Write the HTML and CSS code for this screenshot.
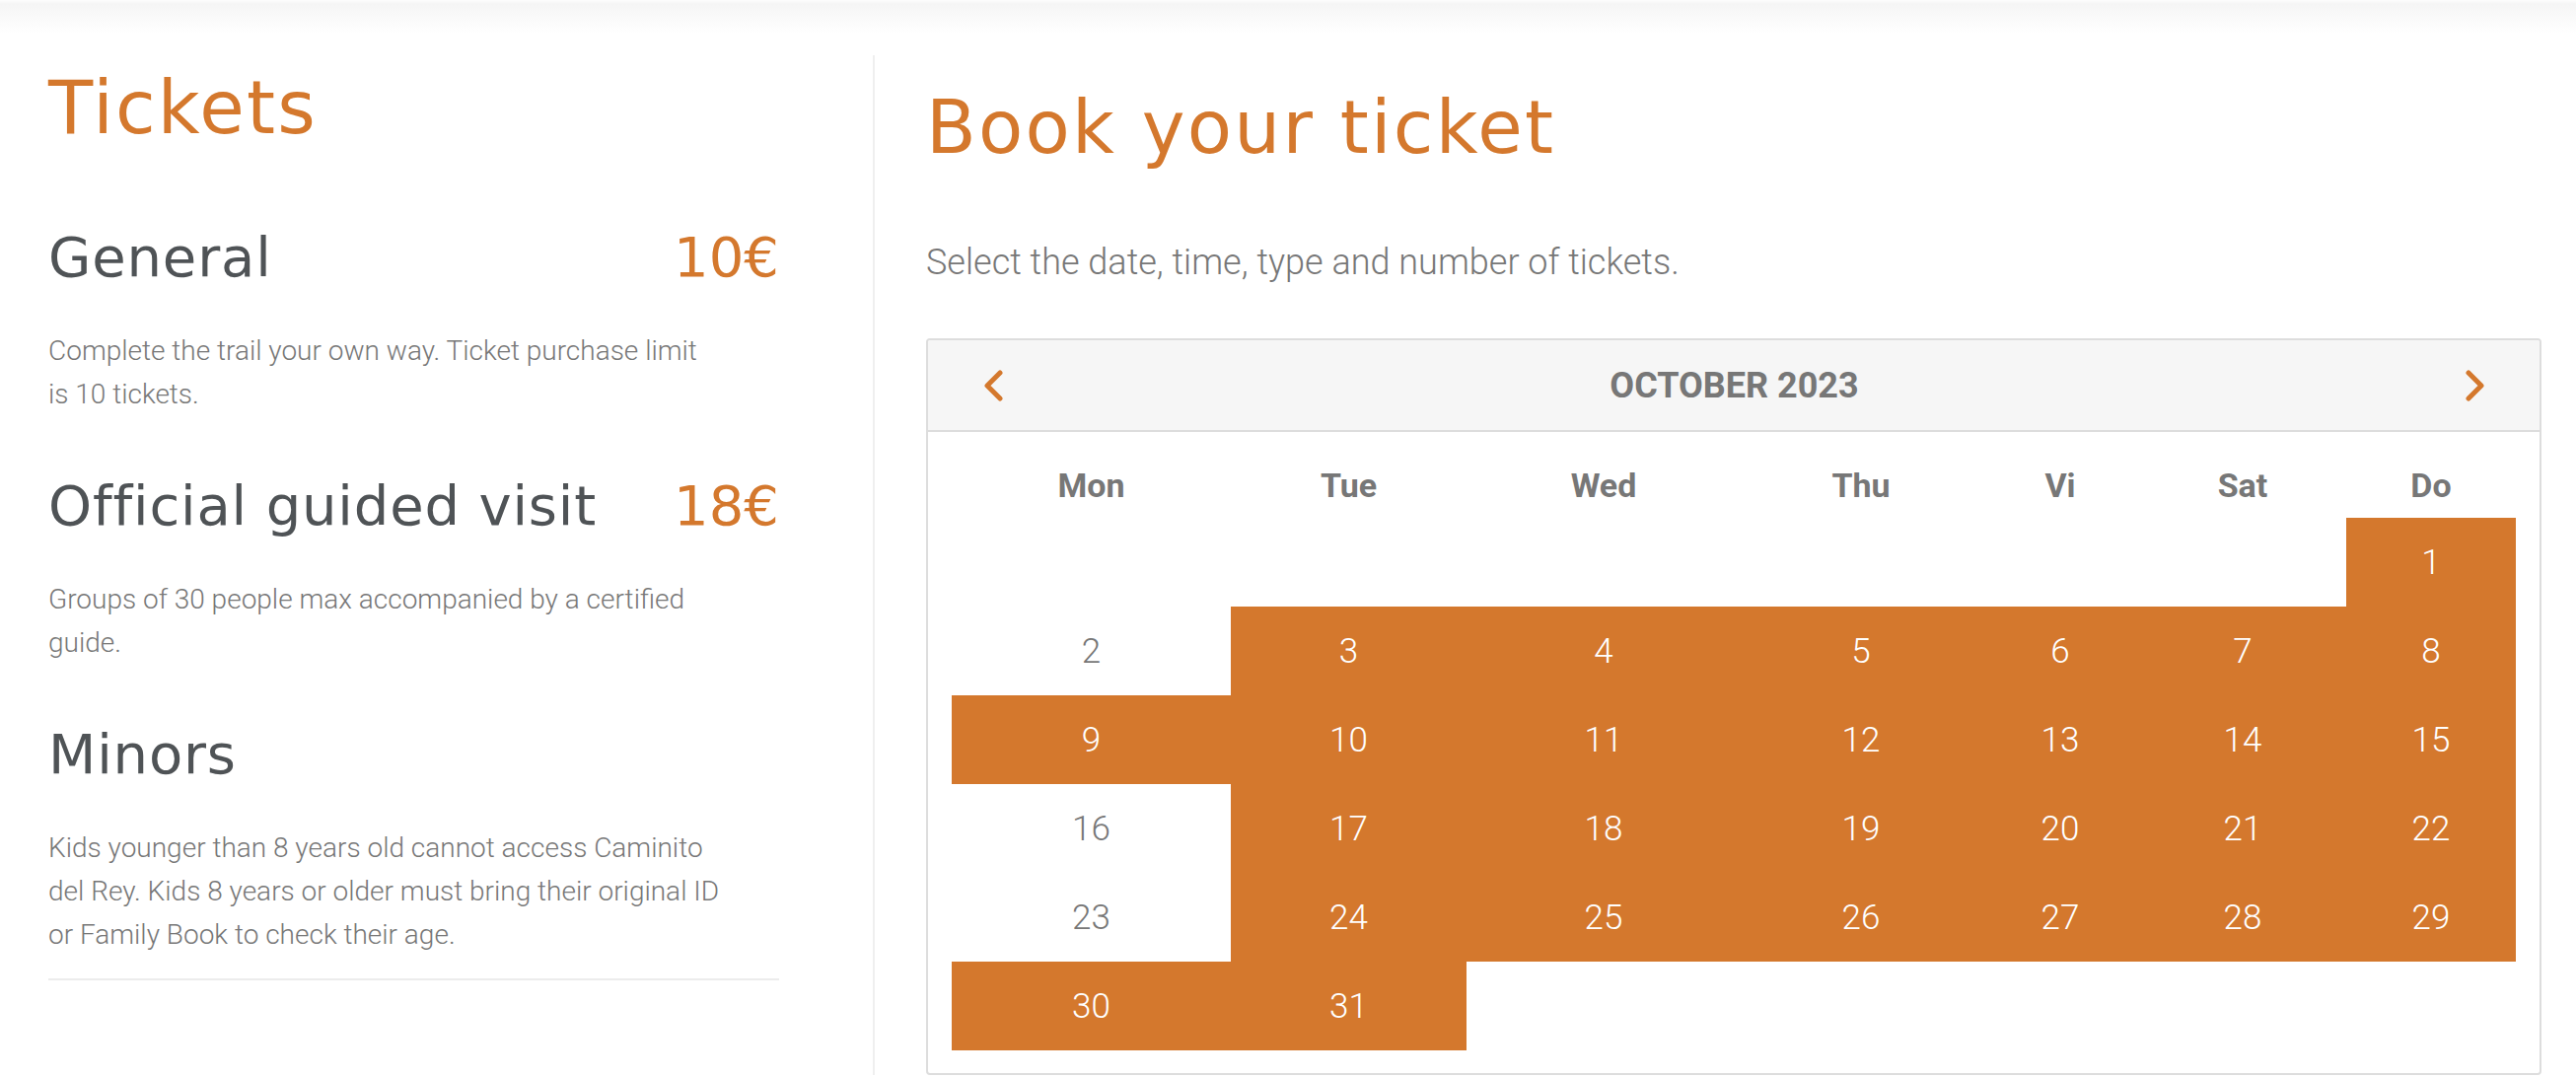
FILE: index.html
```html
<!DOCTYPE html>
<html lang="en">
<head>
  <meta charset="UTF-8" />
  <meta name="viewport" content="width=device-width, initial-scale=1.0"/>
  <title>Tickets - Caminito del Rey</title>
  <link rel="stylesheet" href="styles.css">
</head>
<body>
  <div class="topbar"></div>

  <div class="main">
    <section class="tickets">
      <h1>Tickets</h1>

      <div class="ticket">
        <div class="ticket-head">
          <h2>General</h2>
          <span class="price">10€</span>
        </div>
        <p>Complete the trail your own way. Ticket purchase limit<br>is 10 tickets.</p>
      </div>

      <div class="ticket">
        <div class="ticket-head">
          <h2>Official guided visit</h2>
          <span class="price">18€</span>
        </div>
        <p>Groups of 30 people max accompanied by a certified<br>guide.</p>
      </div>

      <div class="ticket">
        <div class="ticket-head">
          <h2>Minors</h2>
        </div>
        <p>Kids younger than 8 years old cannot access Caminito<br>del Rey. Kids 8 years or older must bring their original ID<br>or Family Book to check their age.</p>
      </div>
    </section>

    <section class="booking">
      <h1>Book your ticket</h1>
      <p class="intro">Select the date, time, type and number of tickets.</p>

      <div class="calendar">
        <div class="calendar-header">
          <span class="nav">
            <svg viewBox="0 0 20 32" width="20" height="32"><path d="M17 3 L4 16 L17 29"/></svg>
          </span>
          <span class="month">OCTOBER 2023</span>
          <span class="nav">
            <svg viewBox="0 0 20 32" width="20" height="32"><path d="M3 3 L16 16 L3 29"/></svg>
          </span>
        </div>

        <div class="calendar-grid">
          <div class="weekday">Mon</div>
          <div class="weekday">Tue</div>
          <div class="weekday">Wed</div>
          <div class="weekday">Thu</div>
          <div class="weekday">Vi</div>
          <div class="weekday">Sat</div>
          <div class="weekday">Do</div>

          <div class="day"></div>
          <div class="day"></div>
          <div class="day"></div>
          <div class="day"></div>
          <div class="day"></div>
          <div class="day"></div>
          <div class="day open">1</div>

          <div class="day">2</div>
          <div class="day open">3</div>
          <div class="day open">4</div>
          <div class="day open">5</div>
          <div class="day open">6</div>
          <div class="day open">7</div>
          <div class="day open">8</div>

          <div class="day open">9</div>
          <div class="day open">10</div>
          <div class="day open">11</div>
          <div class="day open">12</div>
          <div class="day open">13</div>
          <div class="day open">14</div>
          <div class="day open">15</div>

          <div class="day">16</div>
          <div class="day open">17</div>
          <div class="day open">18</div>
          <div class="day open">19</div>
          <div class="day open">20</div>
          <div class="day open">21</div>
          <div class="day open">22</div>

          <div class="day">23</div>
          <div class="day open">24</div>
          <div class="day open">25</div>
          <div class="day open">26</div>
          <div class="day open">27</div>
          <div class="day open">28</div>
          <div class="day open">29</div>

          <div class="day open">30</div>
          <div class="day open">31</div>
          <div class="day"></div>
          <div class="day"></div>
          <div class="day"></div>
          <div class="day"></div>
          <div class="day"></div>
        </div>
      </div>
    </section>
  </div>
</body>
</html>
```

FILE: styles.css
```css
body {
  margin: 0;
  background: #fff;
  font-family: 'Roboto', 'Liberation Sans', sans-serif;
  color: #777;
}

.topbar {
  height: 34px;
  background: linear-gradient(#fdfdfd 0, #f5f5f5 4px, #f8f8f8 12px, #fff 34px);
}

.main {
  display: flex;
  margin-top: 22px;
}

h1 {
  font-family: 'DejaVu Sans', sans-serif;
  font-weight: normal;
  font-size: 74px;
  line-height: 84px;
  letter-spacing: 0.03em;
  color: #d4782d;
  margin: 0;
}

h2 {
  font-family: 'DejaVu Sans', sans-serif;
  font-weight: normal;
  font-size: 56px;
  line-height: 68px;
  letter-spacing: 0.015em;
  color: #4f5356;
  margin: 0;
}

/* left column */
.tickets {
  flex: none;
  width: 741px;
  padding: 11px 95px 0 49px;
}

.tickets h1 {
  margin-bottom: 76px;
}

.ticket-head {
  display: flex;
  justify-content: space-between;
  align-items: baseline;
  margin-bottom: 39px;
}

.price {
  font-family: 'DejaVu Sans', sans-serif;
  font-size: 56px;
  line-height: 68px;
  color: #d4782d;
}

.ticket p {
  font-size: 28px;
  font-weight: 300;
  line-height: 44px;
  white-space: nowrap;
  margin: 0 0 57px;
}

.ticket:last-child {
  border-bottom: 2px solid #ececec;
}

.ticket:last-child p {
  margin-bottom: 22px;
}

/* right column */
.booking {
  flex: 1;
  border-left: 2px solid #efefef;
  padding: 31px 35px 0 52px;
}

.intro {
  font-size: 36px;
  font-weight: 300;
  line-height: 50px;
  margin: 70px 0 52px;
}

.calendar {
  border: 2px solid #ddd;
  border-radius: 4px;
}

.calendar-header {
  height: 91px;
  display: flex;
  align-items: center;
  justify-content: space-between;
  padding: 0 55px 0 56px;
  background: #f6f6f6;
  border-bottom: 2px solid #ddd;
  border-radius: 3px 3px 0 0;
}

.nav svg {
  display: block;
  fill: none;
  stroke: #d4782d;
  stroke-width: 5;
  stroke-linecap: round;
  stroke-linejoin: round;
}

.month {
  font-size: 36px;
  font-weight: 700;
  color: #777;
}

.calendar-grid {
  display: grid;
  grid-template-columns: 283fr 239fr 278fr 244fr 160fr 210fr 172fr;
  grid-template-rows: 87px repeat(6, 90px);
  padding: 0 24px 23px;
}

.weekday {
  display: flex;
  align-items: center;
  justify-content: center;
  box-sizing: border-box;
  padding-top: 20px;
  font-size: 34px;
  font-weight: 700;
  color: #777;
}

.day {
  display: flex;
  align-items: center;
  justify-content: center;
  font-size: 35px;
  font-weight: 300;
  color: #777;
}

.day.open {
  background: #d4782d;
  color: #fff;
}
```
